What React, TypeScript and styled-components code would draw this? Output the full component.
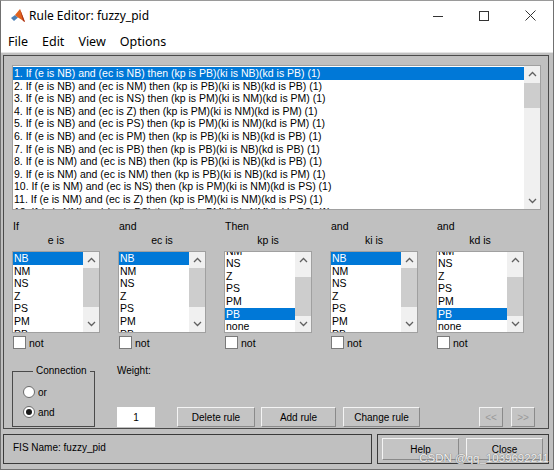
import React from "react";
import styled, { createGlobalStyle } from "styled-components";

const FONT = `"Liberation Sans", Arial, sans-serif`;
const GRAY = "#c0c0c0";
const SELECT = "#0078d7";

const GlobalStyle = createGlobalStyle`
  html, body { margin: 0; padding: 0; background: #fff; }
  body { font-family: ${FONT}; }
`;

const Window = styled.div`
  position: relative;
  width: 554px;
  height: 470px;
  box-sizing: border-box;
  border: 1px solid #707070;
  border-top-color: #9a9a9a;
  background: ${GRAY};
  display: flex;
  flex-direction: column;
  overflow: hidden;
`;

const TitleBar = styled.div`
  height: 29px;
  flex: none;
  background: #fff;
  display: flex;
  align-items: center;
  padding-left: 9px;
`;

const Title = styled.span`
  margin-left: 3px;
  font-family: "Noto Sans", "Open Sans", sans-serif;
  font-size: 12px;
  color: #000;
  flex: 1;
`;

const WinButton = styled.div`
  width: 46px;
  height: 29px;
  display: flex;
  align-items: center;
  justify-content: center;
`;

const MenuBar = styled.div`
  height: 23px;
  flex: none;
  background: #fff;
  display: flex;
  align-items: center;
  border-bottom: 1px solid #e4e4e4;
  box-sizing: border-box;
`;

const MenuItem = styled.span`
  padding: 0 7px;
  font-family: "Noto Sans", "Open Sans", sans-serif;
  font-size: 12.5px;
  color: #000;
`;

const Content = styled.div`
  flex: 1;
  display: flex;
  flex-direction: column;
  padding: 2px 4px 0 2px;
`;

const Frame = styled.div`
  border: 1px solid #4a4a4a;
  padding: 9px 8px 1px 8px;
  display: flex;
  flex-direction: column;
`;

const ListFrame = styled.div<{ $w: number; $h: number }>`
  width: ${(p) => p.$w}px;
  height: ${(p) => p.$h}px;
  box-sizing: border-box;
  border: 1px solid #a0a0a0;
  background: #fff;
  display: flex;
  overflow: hidden;
`;

const Items = styled.div<{ $shift: number }>`
  flex: 1;
  overflow: hidden;
  & > :first-child {
    margin-top: ${(p) => -p.$shift}px;
  }
`;

const Item = styled.div<{ $selected?: boolean }>`
  height: 12.6px;
  line-height: 12.6px;
  font-size: 10.5px;
  padding-left: 1px;
  white-space: nowrap;
  color: ${(p) => (p.$selected ? "#fff" : "#000")};
  background: ${(p) => (p.$selected ? SELECT : "transparent")};
`;

const ScrollTrack = styled.div`
  width: 16px;
  flex: none;
  background: #f0f0f0;
  display: flex;
  flex-direction: column;
`;

const ArrowBox = styled.div`
  height: 16px;
  flex: none;
  display: flex;
  align-items: center;
  justify-content: center;
`;

const Rail = styled.div`
  flex: 1;
  overflow: hidden;
`;

const Thumb = styled.div<{ $offset: number; $size: number }>`
  margin-top: ${(p) => p.$offset}px;
  height: ${(p) => p.$size}px;
  background: #cdcdcd;
`;

const Chevron = ({ dir }: { dir: "up" | "down" }) => (
  <svg width="9" height="6" viewBox="0 0 9 6">
    <polyline
      points={dir === "up" ? "1,5 4.5,1.5 8,5" : "1,1 4.5,4.5 8,1"}
      fill="none"
      stroke="#606060"
      strokeWidth="1.3"
    />
  </svg>
);

const Scrollbar = ({ offset, size }: { offset: number; size: number }) => (
  <ScrollTrack>
    <ArrowBox>
      <Chevron dir="up" />
    </ArrowBox>
    <Rail>
      <Thumb $offset={offset} $size={size} />
    </Rail>
    <ArrowBox>
      <Chevron dir="down" />
    </ArrowBox>
  </ScrollTrack>
);

const Columns = styled.div`
  margin-top: 10px;
  display: grid;
  grid-template-columns: repeat(5, 88px);
  column-gap: 18px;
`;

const Column = styled.div`
  display: flex;
  flex-direction: column;
`;

const Caption = styled.div<{ $center?: boolean }>`
  height: 12px;
  line-height: 12px;
  font-size: 10.5px;
  color: #000;
  padding-left: ${(p) => (p.$center ? 0 : 1)}px;
  text-align: ${(p) => (p.$center ? "center" : "left")};
  margin-top: ${(p) => (p.$center ? 2 : 0)}px;
  margin-bottom: ${(p) => (p.$center ? 5 : 0)}px;
`;

const CheckRow = styled.label`
  margin-top: 3px;
  display: flex;
  align-items: center;
  gap: 3px;
  font-size: 10.5px;
  padding-left: 1px;
`;

const CheckBox = styled.span`
  width: 13px;
  height: 13px;
  box-sizing: border-box;
  background: #fff;
  border: 1px solid #7a7a7a;
`;

const BottomRow = styled.div`
  margin-top: 16px;
  display: flex;
`;

const Group = styled.fieldset`
  margin: 0;
  width: 83px;
  height: 62px;
  box-sizing: border-box;
  border: 1px solid #4a4a4a;
  padding: 8px 0 0 10px;
  display: flex;
  flex-direction: column;
  gap: 6px;
`;

const Legend = styled.legend`
  margin-left: 10px;
  padding: 0 3px;
  font-size: 10px;
  line-height: 12px;
`;

const RadioRow = styled.div`
  height: 14px;
  display: flex;
  align-items: center;
  gap: 3px;
  font-size: 10px;
`;

const Radio = styled.span<{ $on?: boolean }>`
  width: 12px;
  height: 12px;
  box-sizing: border-box;
  border-radius: 50%;
  border: 1px solid #6a6a6a;
  background: #fff;
  display: flex;
  align-items: center;
  justify-content: center;
  &::after {
    content: "";
    width: 6px;
    height: 6px;
    border-radius: 50%;
    background: ${(p) => (p.$on ? "#1a1a1a" : "transparent")};
  }
`;

const WeightArea = styled.div`
  margin-left: 22px;
  flex: 1;
  display: flex;
  flex-direction: column;
  justify-content: space-between;
`;

const Label = styled.div`
  font-size: 10px;
  line-height: 12px;
`;

const ButtonRow = styled.div`
  display: flex;
  align-items: center;
`;

const WeightInput = styled.div`
  width: 38px;
  height: 20px;
  background: #fff;
  font-size: 10px;
  display: flex;
  align-items: center;
  justify-content: center;
`;

const Button = styled.div<{ $w: number; $ml: number; $disabled?: boolean; $h?: number }>`
  width: ${(p) => p.$w}px;
  height: ${(p) => p.$h ?? 20}px;
  margin-left: ${(p) => p.$ml}px;
  box-sizing: border-box;
  background: #c4c4c4;
  border: 1px solid;
  border-color: #f4f4f4 #8a8a8a #8a8a8a #f4f4f4;
  font-size: 10px;
  color: ${(p) => (p.$disabled ? "#9a9a9a" : "#000")};
  display: flex;
  align-items: center;
  justify-content: center;
`;

const StatusRow = styled.div`
  margin-top: 5px;
  display: flex;
  gap: 5px;
  height: 30px;
`;

const StatusBox = styled.div`
  width: 369px;
  box-sizing: border-box;
  border: 1px solid #3a3a3a;
  padding: 7px 0 0 9px;
  font-size: 10px;
  line-height: 12px;
`;

const HelpBox = styled.div`
  flex: 1;
  box-sizing: border-box;
  border: 1px solid #3a3a3a;
  padding: 3px 0 0 4px;
  display: flex;
  gap: 7px;
`;

const Watermark = styled.div`
  position: absolute;
  right: 4px;
  bottom: 5px;
  font-family: ${FONT};
  font-size: 11.5px;
  color: rgba(255, 255, 255, 0.9);
  text-shadow: 0 0 1px #7a7a7a, 0 0 1px #7a7a7a;
  pointer-events: none;
`;

const MatlabIcon = () => (
  <svg width="16" height="16" viewBox="0 0 16 16">
    <path d="M1 10 L5 7 L8 9.5 L4 13 Z" fill="#4a7fb5" />
    <path d="M5 7 L10 1 L15 14 L12 12 L8 9.5 Z" fill="#e0621e" />
    <path d="M10 1 L15 14 L13 13 Z" fill="#a8321a" />
  </svg>
);

const rules = [
  "1. If (e is NB) and (ec is NB) then (kp is PB)(ki is NB)(kd is PB) (1)",
  "2. If (e is NB) and (ec is NM) then (kp is PB)(ki is NB)(kd is PB) (1)",
  "3. If (e is NB) and (ec is NS) then (kp is PM)(ki is NM)(kd is PM) (1)",
  "4. If (e is NB) and (ec is Z) then (kp is PM)(ki is NM)(kd is PM) (1)",
  "5. If (e is NB) and (ec is PS) then (kp is PM)(ki is NM)(kd is PM) (1)",
  "6. If (e is NB) and (ec is PM) then (kp is PB)(ki is NB)(kd is PB) (1)",
  "7. If (e is NB) and (ec is PB) then (kp is PB)(ki is NB)(kd is PB) (1)",
  "8. If (e is NM) and (ec is NB) then (kp is PB)(ki is NB)(kd is PB) (1)",
  "9. If (e is NM) and (ec is NM) then (kp is PB)(ki is NB)(kd is PM) (1)",
  "10. If (e is NM) and (ec is NS) then (kp is PM)(ki is NM)(kd is PS) (1)",
  "11. If (e is NM) and (ec is Z) then (kp is PM)(ki is NM)(kd is PS) (1)",
  "12. If (e is NM) and (ec is PS) then (kp is PM)(ki is NM)(kd is PS) (1)",
];

const terms = ["NB", "NM", "NS", "Z", "PS", "PM", "PB", "none"];

type Col = { head: string; name: string; selected: number; shift: number; thumb: number };

const cols: Col[] = [
  { head: "If", name: "e is", selected: 0, shift: 0, thumb: 0 },
  { head: "and", name: "ec is", selected: 0, shift: 0, thumb: 0 },
  { head: "Then", name: "kp is", selected: 6, shift: 20, thumb: 9 },
  { head: "and", name: "ki is", selected: 0, shift: 0, thumb: 0 },
  { head: "and", name: "kd is", selected: 6, shift: 20, thumb: 9 },
];

export default function App() {
  return (
    <>
      <GlobalStyle />
      <Window>
        <TitleBar>
          <MatlabIcon />
          <Title>Rule Editor: fuzzy_pid</Title>
          <WinButton>
            <svg width="10" height="10" viewBox="0 0 10 10">
              <line x1="0" y1="5.5" x2="10" y2="5.5" stroke="#333" strokeWidth="1" />
            </svg>
          </WinButton>
          <WinButton>
            <svg width="10" height="10" viewBox="0 0 10 10">
              <rect x="0.5" y="0.5" width="9" height="9" fill="none" stroke="#333" strokeWidth="1" />
            </svg>
          </WinButton>
          <WinButton>
            <svg width="11" height="11" viewBox="0 0 11 11">
              <path d="M0.5 0.5 L10.5 10.5 M10.5 0.5 L0.5 10.5" stroke="#333" strokeWidth="1" />
            </svg>
          </WinButton>
        </TitleBar>
        <MenuBar>
          <MenuItem>File</MenuItem>
          <MenuItem>Edit</MenuItem>
          <MenuItem>View</MenuItem>
          <MenuItem>Options</MenuItem>
        </MenuBar>
        <Content>
          <Frame>
            <ListFrame $w={529} $h={145}>
              <Items $shift={-1}>
                {rules.map((r, i) => (
                  <Item key={r} $selected={i === 0}>
                    {r}
                  </Item>
                ))}
              </Items>
              <Scrollbar offset={1} size={25} />
            </ListFrame>
            <Columns>
              {cols.map((c) => (
                <Column key={c.name}>
                  <Caption>{c.head}</Caption>
                  <Caption $center>{c.name}</Caption>
                  <ListFrame $w={88} $h={82}>
                    <Items $shift={c.shift}>
                      {terms.map((t, i) => (
                        <Item key={t} $selected={i === c.selected}>
                          {t}
                        </Item>
                      ))}
                    </Items>
                    <Scrollbar offset={c.thumb} size={39} />
                  </ListFrame>
                  <CheckRow>
                    <CheckBox />
                    not
                  </CheckRow>
                </Column>
              ))}
            </Columns>
            <BottomRow>
              <Group>
                <Legend>Connection</Legend>
                <RadioRow>
                  <Radio />
                  or
                </RadioRow>
                <RadioRow>
                  <Radio $on />
                  and
                </RadioRow>
              </Group>
              <WeightArea>
                <Label>Weight:</Label>
                <ButtonRow>
                  <WeightInput>1</WeightInput>
                  <Button $w={78} $ml={22}>Delete rule</Button>
                  <Button $w={75} $ml={6}>Add rule</Button>
                  <Button $w={77} $ml={7}>Change rule</Button>
                  <Button $w={24} $ml={59} $disabled>
                    &lt;&lt;
                  </Button>
                  <Button $w={24} $ml={8} $disabled>
                    &gt;&gt;
                  </Button>
                </ButtonRow>
              </WeightArea>
            </BottomRow>
          </Frame>
          <StatusRow>
            <StatusBox>FIS Name: fuzzy_pid</StatusBox>
            <HelpBox>
              <Button $w={77} $ml={0} $h={22}>Help</Button>
              <Button $w={77} $ml={0} $h={22}>Close</Button>
            </HelpBox>
          </StatusRow>
        </Content>
        <Watermark>CSDN @qq_1039692211</Watermark>
      </Window>
    </>
  );
}
